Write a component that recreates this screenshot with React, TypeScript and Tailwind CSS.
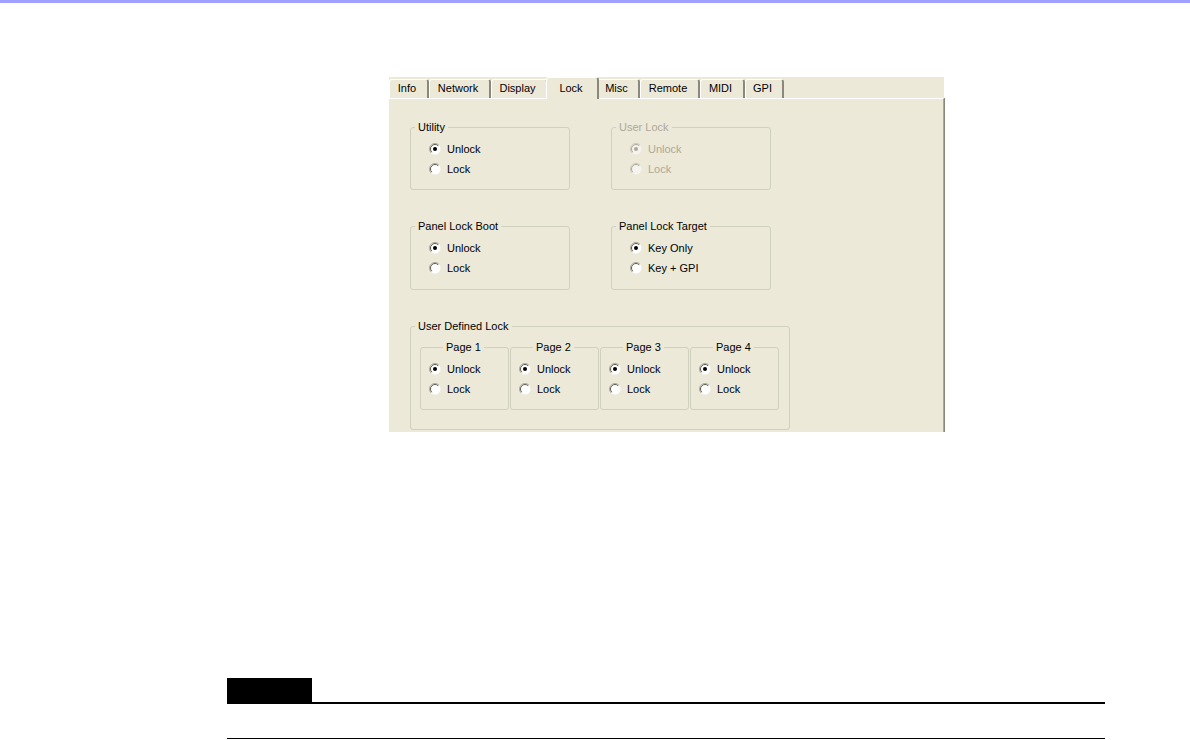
import React from "react";

const FONT = { fontFamily: "'Liberation Sans', Arial, sans-serif" };

type Tab = { label: string; width: string };

const tabs: Tab[] = [
  { label: "Info", width: "w-[40px]" },
  { label: "Network", width: "w-[62px]" },
  { label: "Display", width: "w-[57px]" },
  { label: "Lock", width: "w-[53px]" },
  { label: "Misc", width: "w-[43px]" },
  { label: "Remote", width: "w-[60px]" },
  { label: "MIDI", width: "w-[45px]" },
  { label: "GPI", width: "w-[39px]" },
];

// classic windows radio glyph
function Radio({ checked, disabled }: { checked?: boolean; disabled?: boolean }) {
  return (
    <svg width="12" height="12" viewBox="0 0 12 12" className="shrink-0">
      <circle cx="6" cy="6" r="5.5" fill={disabled ? "#f4f3ee" : "#ffffff"} />
      <path d="M2.1 9.9 A5.5 5.5 0 0 1 9.9 2.1" stroke={disabled ? "#c9c6b8" : "#aca899"} strokeWidth="1" fill="none" />
      <path d="M2.8 9.2 A4.5 4.5 0 0 1 9.2 2.8" stroke={disabled ? "#aca899" : "#5e5c54"} strokeWidth="1" fill="none" />
      {checked && <circle cx="6" cy="6" r="2" fill={disabled ? "#aca899" : "#000000"} />}
    </svg>
  );
}

function Option({ label, checked, disabled }: { label: string; checked?: boolean; disabled?: boolean }) {
  return (
    <div className={`flex items-center gap-[6px] h-[20px] ${disabled ? "text-[#aca899]" : "text-black"}`}>
      <Radio checked={checked} disabled={disabled} />
      <span className="leading-[13px]">{label}</span>
    </div>
  );
}

function Group({
  title,
  disabled,
  className,
  labelLeft = "left-[4px]",
  children,
}: {
  title: string;
  disabled?: boolean;
  className: string;
  labelLeft?: string;
  children: React.ReactNode;
}) {
  return (
    <div className={`relative border border-[#d0d0bf] rounded-[3px] ${className}`}>
      <span
        className={`absolute -top-[7px] ${labelLeft} px-[3px] bg-[#ece9d8] leading-[13px] ${
          disabled ? "text-[#aca899]" : "text-black"
        }`}
      >
        {title}
      </span>
      {children}
    </div>
  );
}

function TwoOptions({ a, b, disabled }: { a: string; b: string; disabled?: boolean }) {
  return (
    <>
      <Option label={a} checked disabled={disabled} />
      <Option label={b} disabled={disabled} />
    </>
  );
}

export default function App() {
  return (
    <div className="w-[1190px] h-[740px] bg-white overflow-hidden text-[11px]" style={FONT}>
      <div className="h-[3px] bg-[#a0a0ff]" />

      {/* settings dialog capture */}
      <div className="ml-[389px] mt-[74px] w-[555px] h-[355px] bg-[#ece9d8] flex flex-col">
        <div className="flex items-end h-[21px] shrink-0">
          {tabs.map((t) =>
            t.label === "Lock" ? (
              <div
                key={t.label}
                className={`${t.width} h-[22px] -mx-[2px] -mb-px relative z-10 bg-[#ece9d8] border-t border-l border-white border-r-2 border-r-[#8a887d] rounded-t-[3px] flex justify-center pt-[2px] pr-[2px] text-black`}
              >
                {t.label}
              </div>
            ) : (
              <div
                key={t.label}
                className={`${t.width} h-[19px] bg-[#ece9d8] border-t border-l border-white border-r-2 border-r-[#8a887d] rounded-t-[3px] flex items-center justify-center pr-[3px] pb-[1px] text-black`}
              >
                {t.label}
              </div>
            )
          )}
        </div>

        <div className="flex-1 border-t border-white border-r border-r-[#aca899] shadow-[1px_0_0_#8a887d] pl-[21px] pt-[28px] flex flex-col gap-[36px]">
          <div className="flex gap-[41px]">
            <Group title="Utility" className="w-[160px] h-[63px] pl-[18px] pt-[11px]">
              <TwoOptions a="Unlock" b="Lock" />
            </Group>
            <Group title="User Lock" disabled className="w-[160px] h-[63px] pl-[18px] pt-[11px]">
              <TwoOptions a="Unlock" b="Lock" disabled />
            </Group>
          </div>

          <div className="flex gap-[41px]">
            <Group title="Panel Lock Boot" className="w-[160px] h-[64px] pl-[18px] pt-[11px]">
              <TwoOptions a="Unlock" b="Lock" />
            </Group>
            <Group title="Panel Lock Target" className="w-[160px] h-[64px] pl-[18px] pt-[11px]">
              <TwoOptions a="Key Only" b="Key + GPI" />
            </Group>
          </div>

          <Group title="User Defined Lock" className="w-[380px] h-[104px] pl-[9px] pt-[20px]">
            <div className="flex gap-[1px]">
              {["Page 1", "Page 2", "Page 3", "Page 4"].map((p) => (
                <Group key={p} title={p} labelLeft="left-[22px]" className="w-[89px] h-[63px] pl-[8px] pt-[11px]">
                  <TwoOptions a="Unlock" b="Lock" />
                </Group>
              ))}
            </div>
          </Group>
        </div>
      </div>

      {/* note heading rule */}
      <div className="ml-[227px] mt-[246px] w-[878px]">
        <div className="w-[85px] h-[24px] bg-black" />
        <div className="h-[1.5px] bg-black" />
        <div className="h-[34px]" />
        <div className="h-[1.5px] bg-black" />
      </div>
    </div>
  );
}
